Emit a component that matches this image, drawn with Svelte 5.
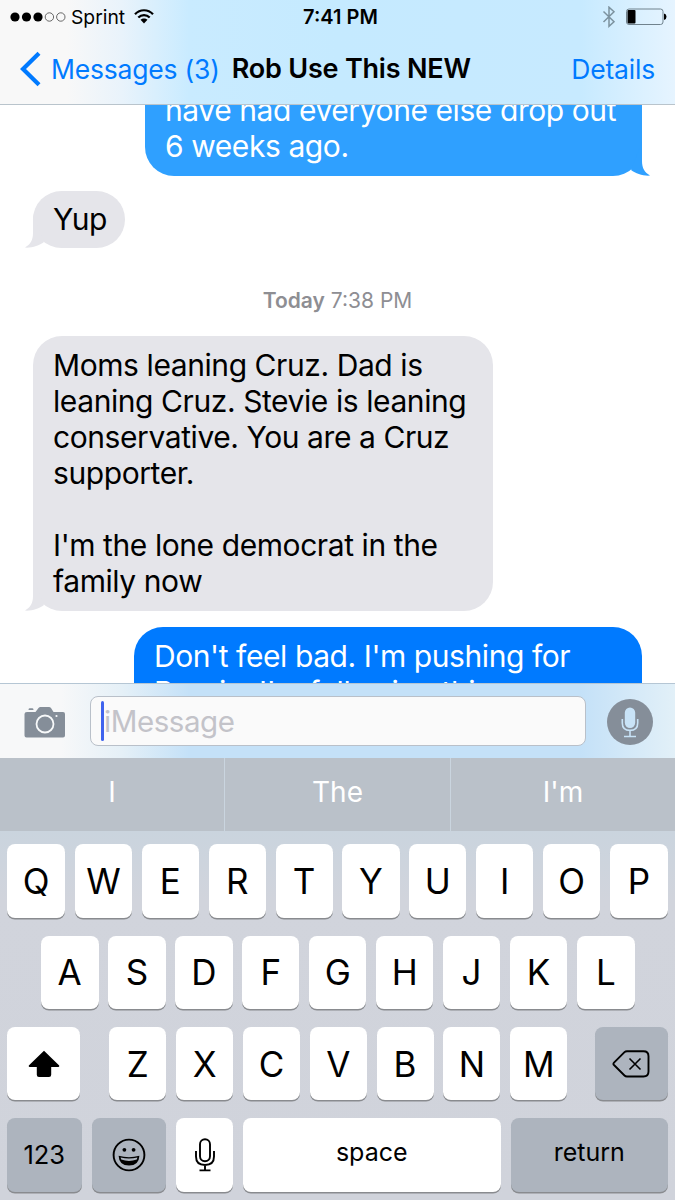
<script lang="ts">
	type Message = { from: 'me' | 'them'; kind: string; lines: string[] };

	const earlier: Message[] = [
		{ from: 'me', kind: 'scrolled', lines: ['have had everyone else drop out', '6 weeks ago.'] },
		{ from: 'them', kind: 'short', lines: ['Yup'] }
	];

	const today: Message[] = [
		{
			from: 'them',
			kind: 'long',
			lines: [
				'Moms leaning Cruz. Dad is',
				'leaning Cruz. Stevie is leaning',
				'conservative. You are a Cruz',
				'supporter.',
				'',
				"I'm the lone democrat in the",
				'family now'
			]
		},
		{
			from: 'me',
			kind: 'latest',
			lines: ["Don't feel bad. I'm pushing for", "Bernie. I'm following this"]
		}
	];

	const suggestions = ['I', 'The', "I'm"];
	const topRow = 'QWERTYUIOP'.split('');
	const homeRow = 'ASDFGHJKL'.split('');
	const bottomRow = 'ZXCVBNM'.split('');
</script>

{#snippet bubble(message: Message)}
	<div class="bubble {message.from} {message.kind}">
		{#each message.lines as line}
			<p>{line}</p>
		{/each}
		<svg class="tail" width="24" height="34" viewBox="0 0 24 34">
			<path d="M9 0V19C9 26 6.500 30.500 .8 33.600C8 34.200 15 31.500 20 28Z" />
		</svg>
	</div>
{/snippet}

<div class="phone">
	<header>
		<div class="status">
			<div class="carrier">
				<svg width="56" height="12" viewBox="0 0 56 12">
					<circle cx="5" cy="6" r="4.600" />
					<circle cx="16.500" cy="6" r="4.600" />
					<circle cx="28" cy="6" r="4.600" />
					<circle class="empty" cx="39.400" cy="6" r="4.200" />
					<circle class="empty" cx="50.800" cy="6" r="4.200" />
				</svg>
				<span>Sprint</span>
				<svg class="wifi" width="20" height="15" viewBox="0 0 20 15">
					<path class="arc" d="M1 5.300C6-.1 14-.1 19 5.300" />
					<path class="arc" d="M4.300 8.600C7.500 5.200 12.500 5.200 15.700 8.600" />
					<path d="M6.500 10.800C8.500 8.900 11.500 8.900 13.500 10.800L10 14.400Z" />
				</svg>
			</div>
			<time>7:41 PM</time>
			<div class="power">
				<svg width="14" height="22" viewBox="0 0 14 22">
					<path class="bluetooth" d="M1.500 5.500L12 15.800L7 20.300V1.200L12 5.700L1.500 16" />
				</svg>
				<svg width="42" height="18" viewBox="0 0 42 18">
					<rect class="shell" x="1.500" y="1" width="36.500" height="15.500" rx="2.500" />
					<rect x="2.500" y="2" width="8" height="13.500" rx="1" />
					<path d="M39 5.500Q41.500 6 41.500 8.700T39 12Z" />
				</svg>
			</div>
		</div>
		<nav>
			<svg width="22" height="36" viewBox="0 0 22 36">
				<path d="M20 2.200L4 18L20 33.800" />
			</svg>
			<span class="back">Messages (3)</span>
			<h1>Rob Use This NEW</h1>
			<span class="details">Details</span>
		</nav>
	</header>

	<main>
		{#each earlier as message}
			{@render bubble(message)}
		{/each}
		<div class="stamp"><b>Today</b> 7:38 PM</div>
		{#each today as message}
			{@render bubble(message)}
		{/each}
	</main>

	<div class="compose">
		<svg class="camera" width="42" height="32" viewBox="0 0 42 32">
			<path
				d="M3 6H11.500L14.500 2Q15.300 1 16.500 1H25Q26.200 1 27 2L29.500 6H39Q41 6 41 8V29.500Q41 31.500 39 31.500H2.500Q.5 31.500 .5 29.500V8Q.5 6 3 6Z"
			/>
			<path d="M5.500 2.300H8.500Q9.500 2.300 9.500 4H4.500Q4.500 2.300 5.500 2.300Z" />
			<circle class="lens" cx="21" cy="18" r="8.500" />
			<circle class="flash" cx="32.500" cy="10" r="1.100" />
		</svg>
		<div class="field"><i></i><span>iMessage</span></div>
		<svg class="dictate" width="46" height="46" viewBox="0 0 46 46">
			<circle cx="23" cy="23" r="23" />
			<rect x="17.800" y="8.500" width="10.400" height="20.500" rx="5.200" />
			<path d="M15.300 20V24Q15.300 31.400 23 31.400T30.700 24V20M23 31.400V37M17 37.500H29" />
		</svg>
	</div>

	<div class="suggestions">
		{#each suggestions as word}
			<span>{word}</span>
		{/each}
	</div>

	<div class="keyboard">
		<div class="row">
			{#each topRow as key}
				<div class="key">{key}</div>
			{/each}
		</div>
		<div class="row home">
			{#each homeRow as key}
				<div class="key">{key}</div>
			{/each}
		</div>
		<div class="row">
			<div class="key shift">
				<svg width="32" height="28" viewBox="0 0 32 28">
					<path
						d="M16 .8L31.200 15.600Q31.600 16.800 30.500 17H23.200V24.800Q23.200 27 21 27H11Q8.800 27 8.800 24.800V17H1.500Q.4 16.800 .8 15.600Z"
					/>
				</svg>
			</div>
			{#each bottomRow as key}
				<div class="key">{key}</div>
			{/each}
			<div class="key dark delete">
				<svg class="outline" width="38" height="28" viewBox="0 0 38 28">
					<path
						d="M12.500 2.200Q13.500 1.200 15 1.200H31.500Q36.500 1.200 36.500 6.200V21.500Q36.500 26.500 31.500 26.500H15Q13.500 26.500 12.500 25.500L2 15Q.8 13.900 2 12.700Z"
					/>
					<path class="thin" d="M17.500 8.500L28.500 19.500M28.500 8.500L17.500 19.500" />
				</svg>
			</div>
		</div>
		<div class="row controls">
			<div class="key dark wide word digits">123</div>
			<div class="key dark wide">
				<svg class="outline" width="34" height="34" viewBox="0 0 34 34">
					<circle cx="17" cy="17" r="15.400" />
					<circle class="solid" cx="12.400" cy="11.800" r="1.900" />
					<circle class="solid" cx="21.600" cy="11.800" r="1.900" />
					<path class="solid" d="M6.600 17.800Q17 20.600 27.400 17.800Q27 27.600 17 27.600T6.600 17.800Z" />
					<path class="teeth" d="M8.600 19.400Q17 21.600 25.400 19.400L24.800 21.600Q17 24.400 9.200 21.600Z" />
				</svg>
			</div>
			<div class="key">
				<svg class="outline" width="22" height="34" viewBox="0 0 22 34">
					<rect x="6" y="1.300" width="10" height="22" rx="5" />
					<path d="M2 13V18.500Q2 27 11 27T20 18.500V13M11 27V32M5.500 32.400H16.500" />
				</svg>
			</div>
			<div class="key space word">space</div>
			<div class="key dark return word">return</div>
		</div>
	</div>
</div>

<style>
	:global(body) {
		margin: 0;
	}

	.phone {
		width: 675px;
		height: 1200px;
		overflow: hidden;
		display: flex;
		flex-direction: column;
		background: #fff;
		color: #000;
		font-family: Inter, 'Liberation Sans', sans-serif;
		white-space: nowrap;
	}

	header {
		box-sizing: border-box;
		height: 105px;
		flex: none;
		border-bottom: 1px solid #b9c4cc;
		background: linear-gradient(90deg, #f8f8f8 10%, #e9f3fb 18%, #c9ebff 28%, #c5eaff 50%, #c7eaff 86%, #e6f4ff 100%);
	}

	.status {
		height: 33px;
		display: grid;
		grid-template-columns: 1fr auto 1fr;
		align-items: center;
		padding: 0 8px 0 10px;
		font-size: 19.3px;
	}

	.carrier,
	.power {
		display: flex;
		align-items: center;
	}

	.carrier span {
		margin-left: 5px;
		padding-top: 1px;
	}

	.empty {
		fill: none;
		stroke: #444;
		stroke-width: 0.8;
	}

	.wifi {
		margin-left: 9px;
	}

	.arc {
		fill: none;
		stroke: #000;
		stroke-width: 2.2;
	}

	time {
		padding: 1px 0 0 4px;
		font-weight: 600;
		font-size: 20px;
	}

	.power {
		justify-content: flex-end;
		gap: 9px;
	}

	.bluetooth {
		fill: none;
		stroke: #7c929f;
		stroke-width: 1.5;
	}

	.shell {
		fill: none;
		stroke: #70828d;
		stroke-width: 1;
	}

	nav {
		display: flex;
		align-items: center;
		height: 71px;
		padding: 0 20px 0 19px;
		font-size: 26.5px;
		letter-spacing: -0.2px;
		color: #007aff;
	}

	nav path {
		fill: none;
		stroke: #007aff;
		stroke-width: 4.2;
	}

	.back {
		margin-left: 10px;
	}

	h1 {
		margin: 0 0 0 12px;
		font-size: 27px;
		font-weight: 600;
		color: #000;
	}

	.details {
		margin-left: auto;
	}

	main {
		height: 578px;
		flex: none;
		overflow: hidden;
		display: flex;
		flex-direction: column;
		align-items: flex-start;
	}

	.bubble {
		position: relative;
		box-sizing: border-box;
		margin-left: 33px;
		padding: 11px 20px 11.5px;
		border-radius: 29px;
		background: #e5e5ea;
		font-size: 30px;
		letter-spacing: -0.42px;
		line-height: 36.1px;
	}

	.bubble p {
		height: 36.1px;
		margin: 0;
	}

	.bubble.me {
		align-self: flex-end;
		margin-right: 33px;
		background: #007aff;
		color: #fff;
	}

	.tail {
		position: absolute;
		left: -9px;
		bottom: 0;
		fill: #e5e5ea;
	}

	.me .tail {
		left: auto;
		right: -9px;
		transform: scaleX(-1);
		fill: #007aff;
	}

	.bubble.scrolled {
		width: 497px;
		margin-top: -23px;
		padding: 10px 20px 12px;
		border-radius: 0 0 29px 29px;
		background: #2fa0ff;
	}

	.scrolled .tail {
		fill: #2fa0ff;
	}

	.short {
		height: 57px;
		width: 92px;
		margin-top: 14.5px;
		padding-top: 10px;
	}

	.stamp {
		align-self: center;
		height: 24px;
		margin: 41px 0 23px;
		font-size: 21px;
		line-height: 24px;
		color: #8e8e93;
	}

	.stamp b {
		font-weight: 600;
	}

	.long {
		width: 460px;
	}

	.latest {
		width: 508px;
		flex: none;
		margin-top: 16px;
	}

	.compose {
		box-sizing: border-box;
		height: 75px;
		flex: none;
		display: flex;
		align-items: center;
		padding: 1px 22px 0 24px;
		border-top: 1px solid #b5c6d4;
		background: linear-gradient(90deg, #f7f8f9 9%, #e5f0f7 18%, #c4e1f8 28%, #c4e1f8 86%, #e2f0f8 100%);
	}

	.camera {
		fill: #858e99;
	}

	.lens {
		fill: none;
		stroke: #f7f9fa;
		stroke-width: 1.8;
	}

	.flash {
		fill: #f7f9fa;
	}

	.field {
		box-sizing: border-box;
		width: 496px;
		height: 50px;
		margin: 0 0 1px 24px;
		padding-left: 10px;
		display: flex;
		align-items: center;
		border: 1px solid #b9c0c9;
		border-radius: 8px;
		background: #fafafa;
		color: #c3c3c9;
		font-size: 29.5px;
		letter-spacing: -0.45px;
	}

	.field span {
		padding-bottom: 1px;
	}

	.field i {
		width: 3px;
		height: 40px;
		border-radius: 1.5px;
		background: #3f63ee;
	}

	.dictate {
		margin-left: auto;
		fill: #858e99;
	}

	.dictate rect {
		fill: #c8e3f7;
	}

	.dictate path {
		fill: none;
		stroke: #c8e3f7;
		stroke-width: 1.6;
	}

	.suggestions {
		height: 73px;
		flex: none;
		display: grid;
		grid-template-columns: 224px 225px 224px;
		gap: 1px;
		background: #cad5df;
	}

	.suggestions span {
		padding-bottom: 5px;
		display: flex;
		align-items: center;
		justify-content: center;
		background: #bac1c9;
		color: #fff;
		font-size: 28px;
	}

	.keyboard {
		flex: 1;
		display: flex;
		flex-direction: column;
		gap: 18px;
		padding: 13.4px 7px 0;
		background: linear-gradient(#cad4de, #d1d4dc 70px, #d0d3db);
	}

	.row {
		display: flex;
		gap: 9.7px;
		height: 73.3px;
	}

	.home {
		padding: 0 33px 0 33.5px;
	}

	.controls {
		gap: 10px;
	}

	.key {
		flex: 1;
		min-width: 0;
		display: flex;
		align-items: center;
		justify-content: center;
		border-radius: 8px;
		background: #fff;
		box-shadow: 0 1.5px 0 #898b8f;
		font-size: 35px;
	}

	.key:first-child,
	.key:last-child {
		flex: 0 0 58.2px;
	}

	.key.dark {
		background: #adb4be;
	}

	.key.shift {
		flex: 0 0 73px;
		margin-right: 19.5px;
	}

	.key.delete {
		flex: 0 0 73px;
		margin-left: 18px;
	}

	.key.wide {
		flex: 0 0 74.5px;
	}

	.key.space {
		flex: 0 0 257.5px;
	}

	.key.return {
		flex: 0 0 157.5px;
	}

	.key.word {
		box-sizing: border-box;
		padding-bottom: 5px;
		font-size: 25px;
	}

	.key.digits {
		padding-bottom: 1px;
		font-size: 25.5px;
	}

	.outline {
		fill: none;
		stroke: #000;
		stroke-width: 1.9;
	}

	.thin {
		stroke-width: 1.6;
	}

	.outline .solid {
		fill: #000;
		stroke: none;
	}

	.outline .teeth {
		fill: #adb4be;
		stroke: none;
	}
</style>
